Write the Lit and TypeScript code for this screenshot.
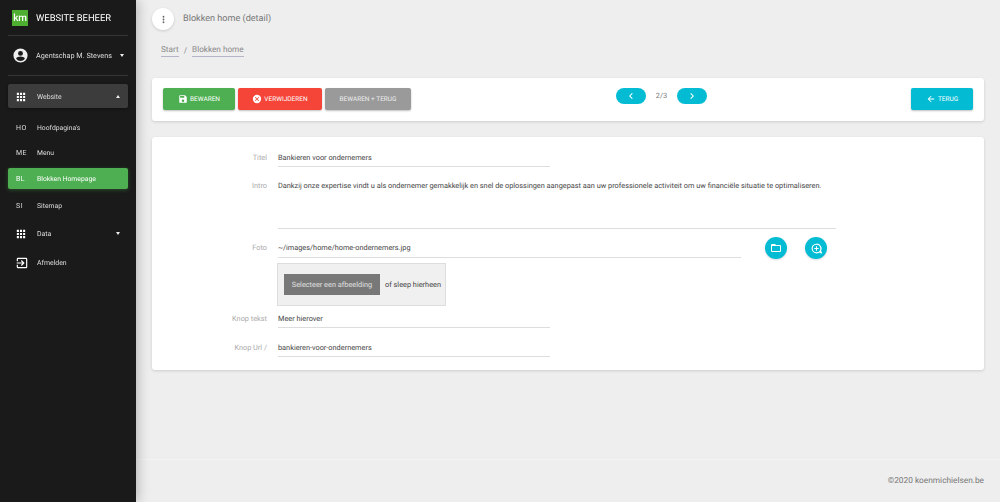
import { LitElement, html, css, svg } from "lit";
import { customElement } from "lit/decorators.js";

const grid = svg`<svg class="ic" viewBox="0 0 24 24" width="10" height="10" fill="#fff"><path d="M2 2h5v5H2zM9.500 2h5v5h-5zM17 2h5v5h-5zM2 9.500h5v5H2zM9.500 9.500h5v5h-5zM17 9.500h5v5h-5zM2 17h5v5H2zM9.500 17h5v5h-5zM17 17h5v5h-5z"/></svg>`;

@customElement("app-root")
export class AppRoot extends LitElement {
  static styles = css`
    :host { display: block; width: 1000px; height: 502px; overflow: hidden; font-family: Roboto, "Liberation Sans", sans-serif; text-rendering: geometricPrecision; background: #eee; }
    * { box-sizing: border-box; }
    .app { display: flex; height: 502px; background: #eee; opacity: .99; will-change: opacity; }
    .side { width: 136px; flex: none; background: #181818; color: #e6e6e6; padding: 0 8px; box-shadow: 1px 0 12px rgba(0,0,0,.28); position: relative; font-size: 6.800px; }
    .brand { height: 36px; display: flex; align-items: center; gap: 8px; padding: 1px 0 0 4px; border-bottom: 1px solid #333; color: #fff; font-size: 9.400px; white-space: nowrap; }
    .logo { width: 16px; height: 16px; background: #4cae2f; color: #fff; font-size: 10px; font-weight: 500; display: flex; align-items: center; justify-content: center; letter-spacing: -.3px; }
    .user { height: 40px; display: flex; align-items: center; padding-left: 4px; gap: 7px; border-bottom: 1px solid #333; font-size: 7.250px; color: #ddd; white-space: nowrap; }
    .user svg { flex: none; }
    .user .caret { margin-left: 1px; }
    .caret { flex: none; width: 0; height: 0; border-left: 2.500px solid transparent; border-right: 2.500px solid transparent; border-top: 3px solid #eee; }
    .caret.up { border-top: 0; border-bottom: 3px solid #eee; }
    .menu { display: flex; flex-direction: column; padding-top: 8px; }
    .item { display: flex; align-items: center; border-radius: 2px; color: #ddd; }
    .item .abbr { width: 29px; padding-left: 8px; flex: none; font-size: 7px; letter-spacing: .5px; }
    .item .ic { margin-left: 8px; margin-right: 11px; flex: none; }
    .item .ic.exit { margin-left: 6.500px; margin-right: 8.500px; }
    .item .lbl { flex: 1; }
    .item .caret { margin-right: 8px; }
    .parent { height: 24px; padding-top: 1px; background: #3a3a3a; font-size: 6.900px; box-shadow: 0 1px 3px rgba(0,0,0,.4); }
    .sub { height: 21px; margin-top: 4px; }
    .sub.first { margin-top: 9px; }
    .sub.active { background: #4caf50; color: #fff; box-shadow: 0 1px 4px rgba(76,175,80,.35); margin-top: 5px; }
    .sub.last { margin-top: 6px; }
    .top { height: 29px; font-size: 6.900px; }
    .top.data { margin-top: 3px; }
    .main { flex: 1; display: flex; flex-direction: column; min-width: 0; }
    .content { flex: 1; padding: 8px 16px 0; }
    .head { display: flex; align-items: center; gap: 9px; height: 22px; }
    .dots { width: 22px; height: 22px; border-radius: 50%; background: #fff; box-shadow: 0 1px 3px rgba(0,0,0,.15); display: flex; align-items: center; justify-content: center; }
    .title { font-size: 9.100px; color: #777; }
    .crumbs { margin: 14px 0 0 9px; height: 14px; font-size: 8.200px; color: #888; display: flex; gap: 5px; align-items: center; }
    .crumbs a { border-bottom: 1px solid #b4b4c8; color: #888; line-height: 11px; }
    .card { background: #fff; border-radius: 3px; box-shadow: 0 1px 3px rgba(0,0,0,.14); }
    .bar { margin-top: 20px; height: 43px; padding: 10px 11px 0; display: flex; align-items: flex-start; }
    .btn { height: 22px; border-radius: 2px; color: #fff; font-size: 6.500px; display: flex; align-items: center; justify-content: center; gap: 2px; box-shadow: 0 1px 2px rgba(0,0,0,.25); }
    .green { width: 72px; background: #4caf50; }
    .red { width: 84px; margin-left: 3px; background: #f44336; }
    .grey { width: 86px; margin-left: 3px; background: #999; color: #eee; }
    .pager { display: flex; align-items: center; margin-left: 205px; height: 16px; font-size: 7.350px; color: #777; }
    .pill { width: 30px; height: 16px; border-radius: 8px; background: #00bcd4; display: flex; align-items: center; justify-content: center; }
    .count { width: 31px; text-align: center; margin-top: -1px; }
    .back { width: 62px; margin-left: auto; background: #00bcd4; }
    .form { margin-top: 16px; height: 233px; display: grid; grid-template-columns: 115px auto; column-gap: 11px; align-content: start; padding-top: 12px; font-size: 7.350px; color: #444; }
    .lab { text-align: right; color: #aaa; line-height: 18px; }
    .lab.up { line-height: 16px; }
    .field { border-bottom: 1px solid #ddd; line-height: 18px; height: 18px; white-space: nowrap; }
    .field.up { line-height: 16px; }
    .short { width: 272px; }
    .r1 { height: 29px; }
    .intro { width: 558px; height: 51px; }
    .r2 { height: 62px; }
    .foto { display: flex; align-items: flex-start; }
    .foto .field { width: 463px; }
    .round { flex: none; width: 22px; height: 22px; border-radius: 50%; background: #00bcd4; display: flex; align-items: center; justify-content: center; box-shadow: 0 1px 2px rgba(0,0,0,.15); }
    .f1 { margin-left: 24px; margin-top: -3px; }
    .f2 { margin-left: 18px; margin-top: -3px; }
    .drop { width: 169px; height: 43px; margin: 4px 0 0 -1px; border: 1px solid #ddd; background: #f0f0f0; display: flex; align-items: center; padding-left: 6px; gap: 5px; color: #444; white-space: nowrap; }
    .sel { flex: none; width: 96px; height: 21px; background: #777; color: #e0e0e0; display: flex; align-items: center; justify-content: center; }
    .k1 { margin-top: 4px; }
    .k2 { margin-top: 11px; }
    .foot { height: 43px; border-top: 1px solid #f3f3f3; background: #eee; display: flex; align-items: center; justify-content: flex-end; padding: 0 16px; font-size: 8.300px; color: #777; }
  `;

  render() {
    return html`<div class="app">
      <aside class="side">
        <div class="brand"><span class="logo">km</span><span>WEBSITE BEHEER</span></div>
        <div class="user">
          <svg viewBox="0 0 24 24" width="17" height="17" fill="#eee"><path d="M12 2a10 10 0 1 0 0 20 10 10 0 0 0 0-20zm0 3.500a3.500 3.500 0 1 1 0 7 3.500 3.500 0 0 1 0-7zm0 14.200a7.600 7.600 0 0 1-6.200-3.200c.1-2 4.100-3.100 6.200-3.100s6.100 1.100 6.200 3.100a7.600 7.600 0 0 1-6.200 3.200z"/></svg>
          <span>Agentschap M. Stevens</span><span class="caret"></span>
        </div>
        <nav class="menu">
          <div class="item parent">${grid}<span class="lbl">Website</span><span class="caret up"></span></div>
          <div class="item sub first"><span class="abbr">HO</span><span class="lbl">Hoofdpagina's</span></div>
          <div class="item sub"><span class="abbr">ME</span><span class="lbl">Menu</span></div>
          <div class="item sub active"><span class="abbr">BL</span><span class="lbl">Blokken Homepage</span></div>
          <div class="item sub last"><span class="abbr">SI</span><span class="lbl">Sitemap</span></div>
          <div class="item top data">${grid}<span class="lbl">Data</span><span class="caret"></span></div>
          <div class="item top"><svg class="ic exit" viewBox="0 0 24 24" width="14" height="14" fill="#fff"><path d="M10.090 15.590 11.500 17l5-5-5-5-1.410 1.410L12.670 11H3v2h9.670l-2.580 2.590zM19 3H5a2 2 0 0 0-2 2v4h2V5h14v14H5v-4H3v4a2 2 0 0 0 2 2h14a2 2 0 0 0 2-2V5a2 2 0 0 0-2-2z"/></svg><span class="lbl">Afmelden</span></div>
        </nav>
      </aside>
      <div class="main">
        <div class="content">
          <div class="head">
            <span class="dots"><svg viewBox="0 0 24 24" width="11" height="11" fill="#666"><path d="M12 8a2 2 0 1 0 0-4 2 2 0 0 0 0 4zm0 2a2 2 0 1 0 0 4 2 2 0 0 0 0-4zm0 6a2 2 0 1 0 0 4 2 2 0 0 0 0-4z"/></svg></span>
            <span class="title">Blokken home (detail)</span>
          </div>
          <div class="crumbs"><a>Start</a><span>/</span><a>Blokken home</a></div>
          <section class="card bar">
            <div class="btn green"><svg viewBox="0 0 24 24" width="10" height="10" fill="#fff"><path d="M17 3H5a2 2 0 0 0-2 2v14a2 2 0 0 0 2 2h14a2 2 0 0 0 2-2V7l-4-4zm-5 16a3 3 0 1 1 0-6 3 3 0 0 1 0 6zm3-10H5V5h10v4z"/></svg>BEWAREN</div>
            <div class="btn red"><svg viewBox="0 0 24 24" width="10" height="10" fill="#fff"><path d="M12 2a10 10 0 1 0 0 20 10 10 0 0 0 0-20zm5 13.590L15.590 17 12 13.410 8.410 17 7 15.590 10.590 12 7 8.410 8.410 7 12 10.590 15.590 7 17 8.410 13.410 12 17 15.590z"/></svg>VERWIJDEREN</div>
            <div class="btn grey">BEWAREN + TERUG</div>
            <div class="pager">
              <span class="pill"><svg viewBox="0 0 24 24" width="12" height="12" fill="#fff"><path d="M15.410 7.410 14 6l-6 6 6 6 1.410-1.410L10.830 12z"/></svg></span>
              <span class="count">2/3</span>
              <span class="pill"><svg viewBox="0 0 24 24" width="12" height="12" fill="#fff"><path d="M10 6 8.590 7.410 13.170 12l-4.580 4.590L10 18l6-6z"/></svg></span>
            </div>
            <div class="btn back"><svg viewBox="0 0 24 24" width="10" height="10" fill="#fff"><path d="M20 11H7.830l5.590-5.590L12 4l-8 8 8 8 1.410-1.410L7.830 13H20v-2z"/></svg>TERUG</div>
          </section>
          <section class="card form">
            <div class="lab r1">Titel</div>
            <div class="r1"><div class="field short">Bankieren voor ondernemers</div></div>
            <div class="lab up r2">Intro</div>
            <div class="r2"><div class="field up intro">Dankzij onze expertise vindt u als ondernemer gemakkelijk en snel de oplossingen aangepast aan uw professionele activiteit om uw financiële situatie te optimaliseren.</div></div>
            <div class="lab up">Foto</div>
            <div>
              <div class="foto">
                <div class="field up">~/images/home/home-ondernemers.jpg</div>
                <span class="round f1"><svg viewBox="0 0 24 24" width="12" height="12" fill="#fff"><path d="M20 6h-8l-2-2H4a2 2 0 0 0-2 2v12a2 2 0 0 0 2 2h16a2 2 0 0 0 2-2V8a2 2 0 0 0-2-2zm0 12H4V8h16v10z"/></svg></span>
                <span class="round f2"><svg viewBox="0 0 24 24" width="13" height="13" fill="#fff"><path d="M12 3a9 9 0 1 0 5.200 16.340L20 21h2v-2l-1.700-2.800A9 9 0 0 0 12 3zm0 16a7 7 0 1 1 0-14 7 7 0 0 1 0 14zm1-11h-2v3H8v2h3v3h2v-3h3v-2h-3V8z"/></svg></span>
              </div>
              <div class="drop"><span class="sel">Selecteer een afbeelding</span><span>of sleep hierheen</span></div>
            </div>
            <div class="lab k1">Knop tekst</div>
            <div class="k1"><div class="field short">Meer hierover</div></div>
            <div class="lab k2">Knop Url /</div>
            <div class="k2"><div class="field short">bankieren-voor-ondernemers</div></div>
          </section>
        </div>
        <footer class="foot">©2020 koenmichielsen.be</footer>
      </div>
    </div>`;
  }
}
